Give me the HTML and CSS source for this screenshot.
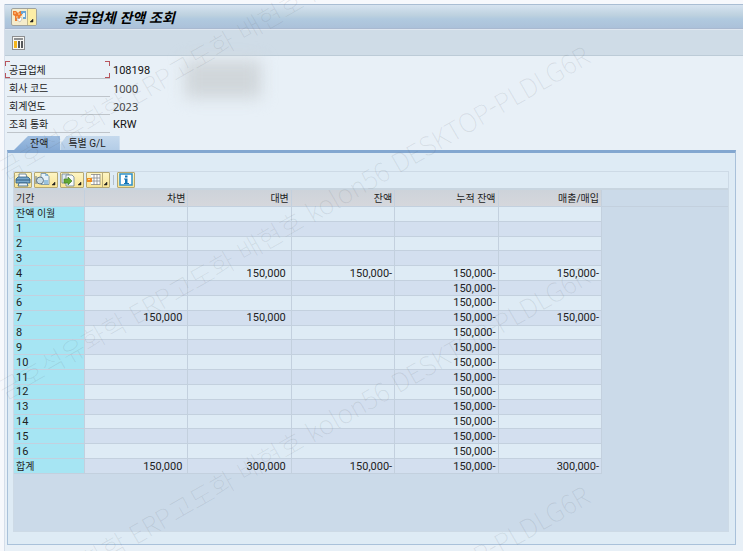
FILE: index.html
```html
<!DOCTYPE html>
<html lang="ko">
<head>
    <meta charset="UTF-8">
    <meta name="viewport" content="width=device-width, initial-scale=1.0">
    <title>공급업체 잔액 조회</title>
    <link rel="stylesheet" href="styles.css">
</head>
<body>
    <div class="window">
        <header class="title-bar">
            <button class="menu-btn" aria-label="메뉴">
                <svg width="24" height="16" viewBox="0 0 24 16">
                    <rect x="15" width="9" height="16" fill="#fdeea6"/>
                    <path d="M1 2h3l2 2 2-2h2v4L8 8v4H6V9l-1 3H3V7L1 6z" fill="#ee7b2c"/>
                    <path d="M2 4h2M6 5h2M4 8h2" stroke="#fbd9a5"/>
                    <path d="M9 2h5v8h-3V5H9z" fill="#6aa5d4"/>
                    <path d="M11 4h2v4h-2z" fill="#e9f3fa"/>
                    <path d="M5 9l2 1 2-2 1 2-2 3-3-2z" fill="#fff" stroke="#9a9a9a" stroke-width=".5"/>
                    <path d="M15.500 0v16" stroke="#c3b98f"/>
                    <path d="M21 10v3h-3z" fill="#222" stroke="#222" stroke-width=".5"/>
                </svg>
            </button>
            <h1>공급업체 잔액 조회</h1>
        </header>

        <div class="app-bar">
            <button class="layout-btn" aria-label="레이아웃">
                <svg width="13" height="14" viewBox="0 0 13 14">
                    <rect x=".5" y=".5" width="12" height="13" fill="#f6f6f4" stroke="#8d8f91"/>
                    <path d="M2 3h9" stroke="#6d7174" stroke-width="1.500"/>
                    <path d="M2 5h3v7H2z" fill="#f4b51c"/>
                    <path d="M6 5h2v7H6zM9 5h2v7H9z" fill="#55585b"/>
                </svg>
            </button>
        </div>

        <main class="content">
            <dl class="details">
                <div class="detail focused"><dt>공급업체</dt><dd>108198</dd></div>
                <div class="detail"><dt>회사 코드</dt><dd class="light">1000</dd></div>
                <div class="detail"><dt>회계연도</dt><dd class="light">2023</dd></div>
                <div class="detail"><dt>조회 통화</dt><dd>KRW</dd></div>
            </dl>
            <div class="masked"></div>

            <nav class="tabs">
                <button class="tab active">잔액</button>
                <button class="tab">특별 G/L</button>
            </nav>

            <section class="panel">
                <div class="grid-box">
                    <div class="grid-toolbar">
                        <button aria-label="인쇄">
                            <svg width="16" height="14" viewBox="0 0 16 14">
                                <path d="M4 1h7l1 4H4z" fill="#fff" stroke="#4d6f8d" stroke-width=".8"/>
                                <path d="M1 6l2-2h10l2 2v4H1z" fill="#78a9cd" stroke="#2f5b7e" stroke-width=".8"/>
                                <path d="M1 7h14" stroke="#2f5b7e"/>
                                <path d="M4 10h8l1 3H3z" fill="#e8f2f8" stroke="#2f5b7e" stroke-width=".8"/>
                            </svg>
                        </button>
                        <button aria-label="인쇄 미리보기">
                            <svg width="22" height="14" viewBox="0 0 22 14">
                                <path d="M6 .5h5l3 3v8H6z" fill="#e6f1f8" stroke="#6b8ba5" stroke-width=".8"/>
                                <path d="M10 2h3M9 8h4M9 10h4" stroke="#4b93c6"/>
                                <circle cx="5" cy="7.500" r="3.500" fill="#c9dce6" stroke="#61788a"/>
                                <path d="M1 3v8" stroke="#66788a"/>
                                <path d="M20 9v3h-3z" fill="#222" stroke="#222" stroke-width=".5"/>
                            </svg>
                        </button>
                        <button aria-label="내보내기">
                            <svg width="22" height="14" viewBox="0 0 22 14">
                                <path d="M1 1h7v9H1z" fill="#e2edf3" stroke="#697f90" stroke-width=".8"/>
                                <path d="M5 2h6l2 2v9H5z" fill="#f7fafb" stroke="#697f90" stroke-width=".8"/>
                                <path d="M3 6h4V4l4 4-4 4v-2H3z" fill="#62a834" stroke="#3e7a1e" stroke-width=".6"/>
                                <path d="M20 9v3h-3z" fill="#222" stroke="#222" stroke-width=".5"/>
                            </svg>
                        </button>
                        <button aria-label="레이아웃 변경">
                            <svg width="22" height="14" viewBox="0 0 22 14">
                                <path d="M4 1.500h9v10H4z" fill="#fff"/>
                                <path d="M4 1.500h9M4 5h9M4 8h9M4 11.500h9M7 1v11M10 1v11M13 1v11" stroke="#85888b" stroke-width=".8"/>
                                <path d="M0 5h5v4H0z" fill="#f08a1d"/>
                                <path d="M1 6h2v1H1z" fill="#fbd38c"/>
                                <path d="M15.500 0v14" stroke="#b9ad7c"/>
                                <path d="M20 9v3h-3z" fill="#222" stroke="#222" stroke-width=".5"/>
                            </svg>
                        </button>
                        <span class="separator"></span>
                        <button aria-label="정보">
                            <svg width="16" height="14" viewBox="0 0 16 14">
                                <rect x="2" y="1" width="12" height="11" fill="#fff" stroke="#2b8fcb" stroke-width="1.500"/>
                                <path d="M7 2.500h2.500v2H7zM6 5.500h3.500V10H11v1H6v-1h1V6.500H6z" fill="#1374b5"/>
                            </svg>
                        </button>
                    </div>

                    <div class="grid-area">
                        <table>
                            <colgroup>
                                <col class="col-period">
                                <col class="col-amount">
                                <col class="col-amount">
                                <col class="col-amount">
                                <col class="col-amount">
                                <col class="col-amount">
                            </colgroup>
                            <thead>
                                <tr><th>기간</th><th>차변</th><th>대변</th><th>잔액</th><th>누적 잔액</th><th>매출/매입</th></tr>
                            </thead>
                            <tbody>
                                <tr><th class="ko">잔액 이월</th><td></td><td></td><td></td><td></td><td></td></tr>
                                <tr><th>1</th><td></td><td></td><td></td><td></td><td></td></tr>
                                <tr><th>2</th><td></td><td></td><td></td><td></td><td></td></tr>
                                <tr><th>3</th><td></td><td></td><td></td><td></td><td></td></tr>
                                <tr><th>4</th><td></td><td class="plus">150,000</td><td>150,000-</td><td>150,000-</td><td>150,000-</td></tr>
                                <tr><th>5</th><td></td><td></td><td></td><td>150,000-</td><td></td></tr>
                                <tr><th>6</th><td></td><td></td><td></td><td>150,000-</td><td></td></tr>
                                <tr><th>7</th><td class="plus">150,000</td><td class="plus">150,000</td><td></td><td>150,000-</td><td>150,000-</td></tr>
                                <tr><th>8</th><td></td><td></td><td></td><td>150,000-</td><td></td></tr>
                                <tr><th>9</th><td></td><td></td><td></td><td>150,000-</td><td></td></tr>
                                <tr><th>10</th><td></td><td></td><td></td><td>150,000-</td><td></td></tr>
                                <tr><th>11</th><td></td><td></td><td></td><td>150,000-</td><td></td></tr>
                                <tr><th>12</th><td></td><td></td><td></td><td>150,000-</td><td></td></tr>
                                <tr><th>13</th><td></td><td></td><td></td><td>150,000-</td><td></td></tr>
                                <tr><th>14</th><td></td><td></td><td></td><td>150,000-</td><td></td></tr>
                                <tr><th>15</th><td></td><td></td><td></td><td>150,000-</td><td></td></tr>
                                <tr><th>16</th><td></td><td></td><td></td><td>150,000-</td><td></td></tr>
                                <tr><th class="ko">합계</th><td class="plus">150,000</td><td class="plus">300,000</td><td>150,000-</td><td>150,000-</td><td>300,000-</td></tr>
                            </tbody>
                        </table>
                    </div>
                </div>
            </section>
        </main>
    </div>

    <div class="watermark" aria-hidden="true">
        <p>금호석유화학 ERP고도화 배현호 kolon56 DESKTOP-PLDLG6R</p>
        <p>금호석유화학 ERP고도화 배현호 kolon56 DESKTOP-PLDLG6R</p>
        <p>금호석유화학 ERP고도화 배현호 kolon56 DESKTOP-PLDLG6R</p>
        <p>금호석유화학 ERP고도화 배현호 kolon56 DESKTOP-PLDLG6R</p>
    </div>
</body>
</html>
```
FILE: styles.css
```css
:root {
    --page: #e8f0f7;
    --panel: #deebf5;
    --grid-bg: #cbdae9;
    --line: #c3d0de;
    --key: #a6e5f3;
    --text: #222;
}

* {
    margin: 0;
    padding: 0;
    box-sizing: border-box;
}

body {
    position: relative;
    min-height: 100vh;
    display: flex;
    padding: 4px 0 0 4px;
    overflow: hidden;
    font-family: Roboto, 'Noto Sans CJK KR', sans-serif;
    font-size: 11px;
    color: var(--text);
    background: #f6f8fc;
}

button {
    font: inherit;
    color: inherit;
    border: none;
    cursor: pointer;
}

svg {
    display: block;
}

.window {
    flex: 1;
    display: flex;
    flex-direction: column;
    border-left: 1px solid #d5deea;
    background: var(--page);
}

.title-bar {
    display: flex;
    align-items: center;
    gap: 27px;
    height: 25px;
    padding-left: 6px;
    border-top: 1px solid #a9bdd3;
    border-bottom: 1px solid #a9b9d0;
    background: linear-gradient(#d6e3f0, #bdd1df 45%, #b1cadf 60%, #abc1da);
}

.title-bar h1 {
    font-family: 'Noto Sans CJK KR', sans-serif;
    font-size: 14px;
    line-height: 20px;
    font-style: italic;
    font-weight: 700;
    color: #000;
}

.menu-btn {
    border: 1px solid #a0a29d;
    border-radius: 2px;
    background: #f5eccb;
    height: 18px;
    overflow: hidden;
}

.app-bar {
    display: flex;
    align-items: center;
    height: 27px;
    padding-left: 7px;
    border-top: 1px solid #dfe7f0;
    border-bottom: 1px solid #bccbd7;
    background: #cfdce7;
}

.content {
    position: relative;
    flex: 1;
    display: flex;
    flex-direction: column;
    padding: 5px 7px 6px 2px;
}

.detail {
    display: flex;
    gap: 3px;
    height: 18px;
    line-height: 20px;
}

.detail dt {
    width: 103px;
    padding-left: 2px;
    font-size: 10px;
    border-bottom: 1px solid #bec4ca;
}

.detail dd {
    color: #111;
}

.detail dd.light {
    font-family: 'Noto Sans', sans-serif;
    color: #444;
}

/* red corner marks round the field that has the focus */
.focused dt {
    --mark: linear-gradient(#b8545c, #b8545c);
    width: 105px;
    margin-left: -2px;
    padding-left: 4px;
    background:
        var(--mark) 0 0 / 5px 1px, var(--mark) 0 0 / 1px 5px,
        var(--mark) 100% 0 / 5px 1px, var(--mark) 100% 0 / 1px 5px,
        var(--mark) 0 100% / 5px 1px, var(--mark) 0 100% / 1px 5px,
        var(--mark) 100% 100% / 5px 1px, var(--mark) 100% 100% / 1px 5px;
    background-repeat: no-repeat;
}

.masked {
    position: absolute;
    left: 180px;
    top: 4px;
    width: 76px;
    height: 38px;
    background: #d0d6da;
    filter: blur(8px);
}

.tabs {
    display: flex;
    padding: 3px 0 0 7px;
}

.tab {
    height: 14px;
    line-height: 15px;
    padding: 0 14px 0 8px;
    font-size: 10px;
    background: linear-gradient(#c5d9ed, #b4cde7);
    clip-path: polygon(6px 0, 100% 0, 100% 100%, 0 100%, 0 8px);
}

.tab.active {
    padding: 0 12px 0 16px;
    background: linear-gradient(#9dbde0, #86abd6);
    clip-path: polygon(14px 0, 100% 0, 100% 100%, 0 100%);
}

.panel {
    flex: 1;
    display: flex;
    padding: 18px 6px 12px 5px;
    border: 1px solid #a9c1da;
    border-top: 3px solid #83a7d0;
    background: var(--panel);
}

.grid-box {
    flex: 1;
    display: flex;
    flex-direction: column;
    border: 1px solid #cddae6;
}

.grid-toolbar {
    display: flex;
    align-items: center;
    gap: 2px;
    height: 18px;
    border-bottom: 2px solid #c8d5e0;
}

.grid-toolbar button {
    height: 16px;
    border: 1px solid #b5a873;
    border-radius: 1px;
    background: linear-gradient(#fdf5c4, #f8e494);
}

.separator {
    width: 1px;
    height: 10px;
    margin: 0 1px;
    background: #b4c0cb;
}

.grid-area {
    flex: 1;
    background: linear-gradient(var(--line), var(--line)) 0 16px / 100% 1px no-repeat var(--grid-bg);
}

table {
    width: 588px;
    height: 284px;
    table-layout: fixed;
    border-collapse: separate;
    border-spacing: 0;
}

.col-period {
    width: 71px;
}

th,
td {
    padding: 0 2px;
    border-right: 1px solid var(--line);
    border-bottom: 1px solid var(--line);
    line-height: 13px;
    font-weight: 400;
    text-align: right;
    white-space: nowrap;
}

th:first-child {
    text-align: left;
}

thead th {
    height: 17px;
    font-size: 10px;
    background: linear-gradient(#cdd3da, #d5d7dc);
}

tbody tr {
    background: var(--panel);
}

tbody tr:nth-child(even) {
    background: #d3dfef;
}

tbody th {
    background: var(--key);
}

tbody th.ko {
    font-size: 10px;
}

td.plus {
    padding-right: 5px;
}

.watermark {
    position: absolute;
    inset: 0;
    overflow: hidden;
    pointer-events: none;
    font-family: 'Noto Sans CJK KR', sans-serif;
    font-weight: 100;
    font-size: 26px;
    line-height: 30px;
    color: rgba(90, 100, 110, 0.14);
}

.watermark p {
    width: 720px;
    margin-bottom: 190px;
    white-space: nowrap;
    transform: translateY(156px) rotate(-30deg);
    transform-origin: 0 50%;
}
```
